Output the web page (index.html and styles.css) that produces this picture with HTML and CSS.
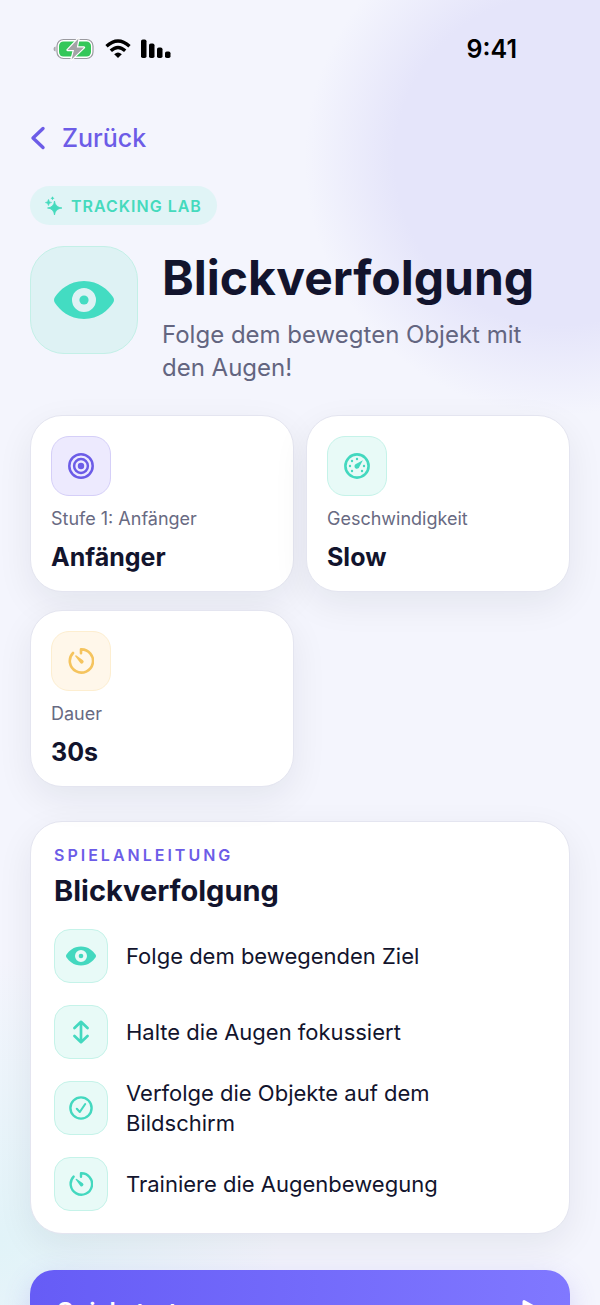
FILE: index.html
```html
<!DOCTYPE html>
<html lang="de">
<head>
    <meta charset="UTF-8">
    <meta name="viewport" content="width=device-width, initial-scale=1.0">
    <title>Blickverfolgung</title>
    <link rel="stylesheet" href="styles.css">
</head>
<body>
    <!-- Shared icons -->
    <svg width="0" height="0" class="sprite" aria-hidden="true">
        <symbol id="icon-eye" viewBox="0 0 60 38">
            <path fill="currentColor" fill-rule="evenodd" d="M30 0C45 0 54 9 59 16Q61 19 59 22C54 29 45 38 30 38S6 29 1 22Q-1 19 1 16C6 9 15 0 30 0ZM30 7A12 12 0 1 0 30 31A12 12 0 1 0 30 7Z"/>
            <circle cx="30" cy="19" r="4.6" fill="currentColor"/>
        </symbol>
        <symbol id="icon-timer" viewBox="0 0 26 26">
            <path d="M5 5A11.6 11.6 0 1 0 13 1.4V5.2" fill="none" stroke="currentColor" stroke-width="2.6" stroke-linecap="round" stroke-linejoin="round"/>
            <path d="M7 7.9Q7.6 7 8.5 7.5L15 12.2A1.9 1.9 0 0 1 12.3 15.1Z" fill="currentColor"/>
        </symbol>
    </svg>

    <div class="screen">
        <header class="status-bar">
            <div class="status-icons">
                <svg class="battery" viewBox="0 0 42 24" width="42" height="24" aria-hidden="true">
                    <path d="M2.6 9.5Q.5 9.8.5 12T2.6 14.5Z" fill="#a8a8ad"/>
                    <rect x="4" y="2.5" width="36" height="19" rx="6.5" fill="#fff" stroke="#9a9a9f" stroke-width="1.2"/>
                    <rect x="6" y="4.5" width="32" height="15" rx="4.5" fill="#34c759"/>
                    <path d="M25.5 1.5L14.5 13H21L18.5 22.5L31 10.5H23.8Z" fill="#a3a3a5" stroke="#fff" stroke-width="2.4" stroke-linejoin="round" paint-order="stroke"/>
                </svg>
                <svg class="wifi" viewBox="0 0 26 20" width="26" height="20" aria-hidden="true">
                    <g fill="none" stroke="#000" stroke-width="3.4">
                        <path d="M1.5 7.2Q13-3.2 24.5 7.2"/>
                        <path d="M5.8 11.8Q13 5.2 20.2 11.8"/>
                    </g>
                    <path d="M9.2 15.2Q13 12 16.8 15.2L13 19Z" fill="#000"/>
                </svg>
                <svg class="signal" viewBox="0 0 30 20" width="30" height="20" aria-hidden="true">
                    <rect x="0" y="0.5" width="5.5" height="18.5" rx="1.8"/>
                    <rect x="8" y="4.5" width="5.5" height="14.5" rx="1.8"/>
                    <rect x="16" y="8.5" width="5.5" height="10.5" rx="1.8"/>
                    <rect x="24" y="12.5" width="5.5" height="6.5" rx="1.8"/>
                </svg>
            </div>
            <time class="clock">9:41</time>
        </header>

        <main class="content">
            <a href="#" class="back">
                <svg viewBox="0 0 16 26" width="16" height="26" aria-hidden="true"><path d="M13 3.5L3 13L13 22.5" fill="none" stroke="currentColor" stroke-width="3.4" stroke-linecap="round" stroke-linejoin="round"/></svg>
                Zurück
            </a>

            <div class="badge">
                <svg viewBox="0 0 18 20" width="18" height="20" aria-hidden="true">
                    <g fill="currentColor">
                        <path d="M9.5 5Q10.2 11.3 17 12Q10.2 12.7 9.5 19Q8.8 12.7 2.5 12Q8.8 11.3 9.5 5Z" stroke="currentColor" stroke-width=".8"/>
                        <path d="M3.5 3.2Q3.9 6.1 6.8 6.5Q3.9 6.9 3.5 9.8Q3.1 6.9.2 6.5Q3.1 6.1 3.5 3.2Z" stroke="currentColor" stroke-width=".4"/>
                        <path d="M7.5 .2Q7.8 1.9 9.5 2.2Q7.8 2.5 7.5 4.2Q7.2 2.5 5.5 2.2Q7.2 1.9 7.5 .2Z"/>
                    </g>
                </svg>
                TRACKING LAB
            </div>

            <section class="hero">
                <div class="hero-icon"><svg width="60" height="38" aria-hidden="true"><use href="#icon-eye"/></svg></div>
                <div class="hero-text">
                    <h1>Blickverfolgung</h1>
                    <p>Folge dem bewegten Objekt mit den Augen!</p>
                </div>
            </section>

            <section class="stats">
                <div class="card">
                    <div class="tile purple">
                        <svg viewBox="0 0 26 26" width="26" height="26" aria-hidden="true">
                            <g fill="none" stroke="currentColor" stroke-width="2.5">
                                <circle cx="13" cy="13" r="11.7"/>
                                <circle cx="13" cy="13" r="6.9"/>
                            </g>
                            <circle cx="13" cy="13" r="3.2" fill="currentColor"/>
                        </svg>
                    </div>
                    <span class="label">Stufe 1: Anfänger</span>
                    <strong class="value">Anfänger</strong>
                </div>
                <div class="card">
                    <div class="tile teal">
                        <svg viewBox="0 0 26 26" width="26" height="26" aria-hidden="true">
                            <circle cx="13" cy="13" r="11.6" fill="none" stroke="currentColor" stroke-width="2.6"/>
                            <g fill="currentColor">
                                <path d="M18.9 7.2L15.4 13.8A2.5 2.5 0 1 1 11.9 11Z"/>
                                <circle cx="13" cy="6" r="1.2"/>
                                <circle cx="8" cy="8" r="1.2"/>
                                <circle cx="6" cy="13" r="1.2"/>
                                <circle cx="8" cy="18" r="1.2"/>
                                <circle cx="18" cy="18" r="1.2"/>
                                <circle cx="20" cy="13" r="1.2"/>
                            </g>
                        </svg>
                    </div>
                    <span class="label">Geschwindigkeit</span>
                    <strong class="value">Slow</strong>
                </div>
                <div class="card">
                    <div class="tile yellow"><svg width="26" height="26" aria-hidden="true"><use href="#icon-timer"/></svg></div>
                    <span class="label">Dauer</span>
                    <strong class="value">30s</strong>
                </div>
            </section>

            <section class="guide">
                <div class="eyebrow">SPIELANLEITUNG</div>
                <h2>Blickverfolgung</h2>
                <ul>
                    <li>
                        <div class="tile teal small"><svg width="30" height="20" aria-hidden="true"><use href="#icon-eye"/></svg></div>
                        <span>Folge dem bewegenden Ziel</span>
                    </li>
                    <li>
                        <div class="tile teal small">
                            <svg viewBox="0 0 24 24" width="24" height="24" aria-hidden="true"><path d="M12 2V22M5.5 8L12 1.8L18.5 8M5.5 16L12 22.2L18.5 16" fill="none" stroke="currentColor" stroke-width="2.7" stroke-linecap="round" stroke-linejoin="round"/></svg>
                        </div>
                        <span>Halte die Augen fokussiert</span>
                    </li>
                    <li>
                        <div class="tile teal small">
                            <svg viewBox="0 0 24 24" width="24" height="24" aria-hidden="true">
                                <circle cx="12" cy="12" r="10.6" fill="none" stroke="currentColor" stroke-width="2.4"/>
                                <path d="M7.8 12.8L10.8 16L16.2 8" fill="none" stroke="currentColor" stroke-width="2.1" stroke-linecap="round" stroke-linejoin="round"/>
                            </svg>
                        </div>
                        <span>Verfolge die Objekte auf dem Bildschirm</span>
                    </li>
                    <li>
                        <div class="tile teal small"><svg width="24" height="24" aria-hidden="true"><use href="#icon-timer"/></svg></div>
                        <span>Trainiere die Augenbewegung</span>
                    </li>
                </ul>
            </section>

            <button type="button" class="start-btn">
                Quickstart
                <svg viewBox="0 0 22 24" width="22" height="24" aria-hidden="true"><path d="M2 2.5L19 12L2 21.5Z" fill="#fff" stroke="#fff" stroke-width="3" stroke-linejoin="round"/></svg>
            </button>
        </main>
    </div>
</body>
</html>
```
FILE: styles.css
```css
* {
    box-sizing: border-box;
}

body {
    margin: 0;
    font-family: Inter, "Liberation Sans", sans-serif;
    color: #12142d;
}

h1, h2, p, ul {
    margin: 0;
    padding: 0;
}

svg {
    display: block;
    flex-shrink: 0;
}

.sprite {
    position: absolute;
}

.screen {
    height: 100vh;
    overflow-y: auto;
    scrollbar-width: none;
    background:
        radial-gradient(circle at 560px 160px, #e5e5fa 0, #e5e5fa 165px, rgba(229, 229, 250, 0) 255px),
        radial-gradient(circle at 0 1240px, #e1f3f8 0, rgba(225, 243, 248, 0) 280px),
        #f4f5fd;
}

.status-bar {
    display: flex;
    justify-content: space-between;
    align-items: center;
    height: 98px;
    padding: 0 83px 0 53px;
}

.status-icons {
    display: flex;
    align-items: center;
    gap: 10px;
}

.clock {
    font-size: 25px;
    font-weight: 600;
    color: #000;
}

.content {
    padding: 24px 30px;
}

.back {
    display: flex;
    align-items: center;
    gap: 16px;
    width: fit-content;
    line-height: 32px;
    font-size: 25px;
    font-weight: 500;
    color: #6c5ce7;
    text-decoration: none;
}

.badge {
    display: flex;
    align-items: center;
    gap: 8px;
    width: fit-content;
    height: 39px;
    margin-top: 32px;
    padding: 0 15px;
    border-radius: 20px;
    background: #e0f4f6;
    color: #45dabd;
    font-size: 16px;
    font-weight: 600;
    letter-spacing: 1px;
}

.hero {
    display: flex;
    gap: 24px;
    margin-top: 21px;
}

.hero-icon {
    display: flex;
    align-items: center;
    justify-content: center;
    flex-shrink: 0;
    width: 108px;
    height: 108px;
    border: 1px solid #c3f0e7;
    border-radius: 34px;
    background: #def2f4;
    color: #43dcc2;
}

.hero-text h1 {
    line-height: 64px;
    font-size: 48px;
    font-weight: 700;
}

.hero-text p {
    margin-top: 8px;
    line-height: 33px;
    font-size: 24px;
    color: #636580;
}

.stats {
    display: grid;
    grid-template-columns: 1fr 1fr;
    gap: 18px 12px;
    margin-top: 31px;
}

.card, .guide {
    border: 1px solid #e4e5f0;
    border-radius: 32px;
    background: #fff;
    box-shadow: 0 12px 36px rgba(20, 28, 40, 0.07);
}

.card {
    display: flex;
    flex-direction: column;
    padding: 20px;
}

.tile {
    display: flex;
    align-items: center;
    justify-content: center;
    flex-shrink: 0;
    width: 60px;
    height: 60px;
    border: 1px solid;
    border-radius: 18px;
}

.tile.small {
    width: 54px;
    height: 54px;
    border-radius: 16px;
}

.purple {
    border-color: #d5cff8;
    background: #edeafe;
    color: #6c5ce7;
}

.teal {
    border-color: #c5f3e9;
    background: #e8faf7;
    color: #43d8bf;
}

.yellow {
    border-color: #fdeed0;
    background: #fff7ea;
    color: #f5c45e;
}

.label {
    margin-top: 11px;
    line-height: 24px;
    font-size: 18px;
    color: #686a82;
}

.value {
    margin-top: 10px;
    line-height: 32px;
    font-size: 25px;
    font-weight: 700;
}

.card {
    padding-bottom: 18px;
}

.guide {
    margin-top: 34px;
    padding: 23px 23px 19px;
}

.eyebrow {
    line-height: 20px;
    font-size: 16px;
    font-weight: 600;
    letter-spacing: 3px;
    color: #6c5ce7;
}

.guide h2 {
    margin-top: 7px;
    line-height: 38px;
    font-size: 29px;
    font-weight: 700;
}

.guide ul {
    display: flex;
    flex-direction: column;
    gap: 16px;
    margin-top: 16px;
    list-style: none;
}

.guide li {
    display: flex;
    align-items: center;
    gap: 18px;
    min-height: 60px;
    line-height: 30px;
    font-size: 22px;
}

.guide li span {
    max-width: 360px;
}

.start-btn {
    display: flex;
    align-items: center;
    justify-content: space-between;
    width: 100%;
    height: 82px;
    margin-top: 36px;
    padding: 0 26px;
    border: 0;
    border-radius: 24px;
    background: linear-gradient(90deg, #665cf6, #8078ff);
    box-shadow: 0 8px 28px rgba(108, 92, 231, 0.2);
    color: #fff;
    font-family: inherit;
    font-size: 24px;
    font-weight: 600;
    cursor: pointer;
}
```
